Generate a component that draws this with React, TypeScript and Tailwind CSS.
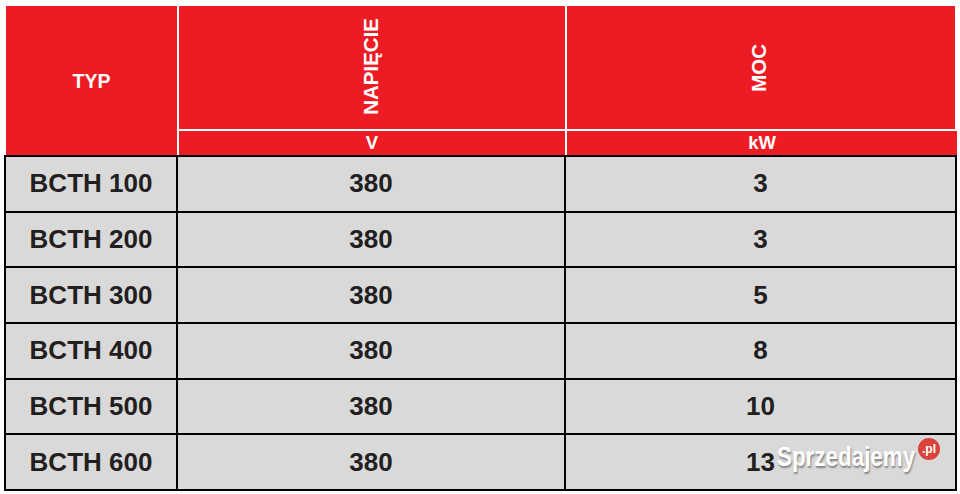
import React from "react";

const rows = [
  ["BCTH 100", "380", "3"],
  ["BCTH 200", "380", "3"],
  ["BCTH 300", "380", "5"],
  ["BCTH 400", "380", "8"],
  ["BCTH 500", "380", "10"],
  ["BCTH 600", "380", "13"],
];

export default function App() {
  return (
    <div
      className="relative w-[960px] h-[494px] bg-white pt-[6px] overflow-hidden"
      style={{ fontFamily: '"Liberation Sans", Arial, sans-serif' }}
    >
      {/* Header */}
      <div className="ml-[6px] w-[949px] h-[149px] grid grid-cols-[171px_386px_388px] grid-rows-[123px_24px] gap-[2px] bg-white font-bold text-white">
        <div className="row-span-2 bg-[#ed1c24] flex items-center justify-center text-[19.5px] pt-[2px]">
          TYP
        </div>
        <div className="bg-[#ed1c24] flex items-center justify-center">
          <span className="[writing-mode:vertical-rl] rotate-180 text-[20.5px] leading-none mr-[1px] mb-[2px]">
            NAPIĘCIE
          </span>
        </div>
        <div className="bg-[#ed1c24] flex items-center justify-center">
          <span className="[writing-mode:vertical-rl] rotate-180 text-[20.5px] leading-none mr-[3px]">
            MOC
          </span>
        </div>
        <div className="bg-[#ed1c24] flex items-center justify-center text-[18.5px] leading-none">
          V
        </div>
        <div className="bg-[#ed1c24] flex items-center justify-center text-[18.5px] leading-none -mr-[2px]">
          kW
        </div>
      </div>

      {/* Body */}
      <div className="ml-[4px] w-[953px] h-[336px] flex flex-col border-l-2 border-t-2 border-black bg-[#d9d9d9] text-[#231f20] font-bold text-[26px]">
        {rows.map((r, i) => (
          <div key={i} className="flex-1 flex">
            <div className="w-[172px] border-r-2 border-b-2 border-black flex items-center justify-center">
              {r[0]}
            </div>
            <div className="w-[388px] border-r-2 border-b-2 border-black flex items-center justify-center">
              {r[1]}
            </div>
            <div className="w-[391px] border-r-2 border-b-2 border-black flex items-center justify-center">
              {r[2]}
            </div>
          </div>
        ))}
      </div>

      {/* Watermark */}
      <div className="absolute left-[777px] top-[438px] w-[170px] h-[40px]">
        <span
          className="absolute left-0 top-[5px] text-[28px] font-bold text-white leading-none whitespace-nowrap scale-x-[0.8] origin-left"
          style={{ textShadow: "1px 2px 2px rgba(0,0,0,0.4)" }}
        >
          Sprzedajemy
        </span>
        <span className="absolute left-[141px] top-0 w-[22px] h-[22px] rounded-full bg-[#d8443c] text-white text-[12px] font-bold flex items-center justify-center">
          .pl
        </span>
      </div>
    </div>
  );
}
